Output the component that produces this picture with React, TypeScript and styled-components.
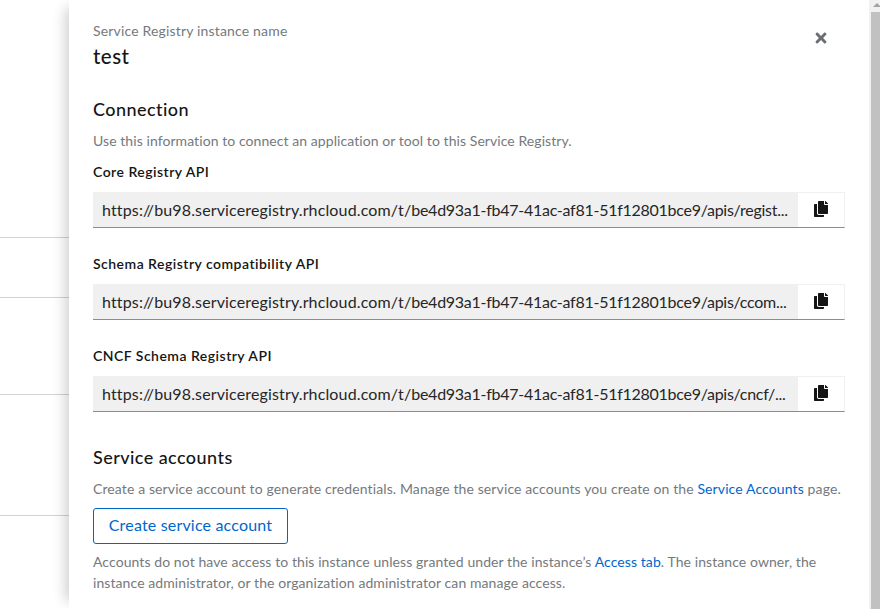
import React from "react";
import styled, { createGlobalStyle } from "styled-components";
import { FaTimes } from "react-icons/fa";

const GlobalStyle = createGlobalStyle`
  * { box-sizing: border-box; }
  html, body { margin: 0; overflow: hidden; background: #fff; }
  body { font-family: Lato, "Open Sans", sans-serif; font-size: 14px; color: #151515; }
  h1, h2, h3, p { margin: 0; }
`;

const Page = styled.div`
  display: flex;
  width: 880px;
  height: 609px;
  overflow: hidden;
`;

const Backdrop = styled.div`
  flex: 0 0 69px;
  display: grid;
  grid-template-rows: 238px 60px 97px 121px 1fr;
`;

const BackdropRow = styled.div`
  border-bottom: 1px solid #d2d2d2;
  &:last-child { border-bottom: 0; }
`;

const Drawer = styled.aside`
  position: relative;
  flex: 0 0 800px;
  padding: 20px 24px 0;
  background: #fff;
  box-shadow: -12px 0 12px -8px rgba(3, 3, 3, 0.18);
`;

const Header = styled.header`
  display: flex;
  justify-content: space-between;
  height: 76px;
`;

const Muted = styled.p<{ $spacing: number }>`
  line-height: 21px;
  color: #75797d;
  letter-spacing: ${(p) => p.$spacing}px;
  white-space: nowrap;
`;

const InstanceName = styled.h1`
  font-size: 20.5px;
  font-weight: 500;
  line-height: 30px;
  letter-spacing: 0.5px;
`;

const CloseButton = styled.button`
  align-self: flex-start;
  display: flex;
  margin: 10px 16px 0 0;
  padding: 0;
  border: 0;
  background: none;
  color: #6a6e73;
`;

const SectionTitle = styled.h2`
  margin-bottom: 7px;
  font-size: 18px;
  font-weight: 500;
  line-height: 27px;
  letter-spacing: 0.44px;
`;

const Fields = styled.div`
  display: flex;
  flex-direction: column;
  gap: 25px;
  padding: 10px 0 32px;
`;

const FieldLabel = styled.h3`
  margin-bottom: 10px;
  font-size: 14px;
  font-weight: 600;
  line-height: 21px;
  letter-spacing: 0.48px;
`;

const CopyField = styled.div`
  display: flex;
  width: 752px;
  height: 36px;
`;

const Url = styled.div`
  flex: 0 0 705px;
  padding-left: 9px;
  border-bottom: 1px solid #8a8d90;
  background: #f0f0f0;
  color: #262626;
  font-size: 16px;
  line-height: 35px;
  letter-spacing: 0.14px;
  white-space: nowrap;
`;

const UrlPath = styled.span`
  letter-spacing: -0.27px;
`;

const CopyButton = styled.button`
  flex: 1;
  display: flex;
  justify-content: center;
  padding: 8px 0 0;
  border: 1px solid #f0f0f0;
  border-left: 0;
  border-bottom-color: #8a8d90;
  background: #fff;
  color: #151515;
`;

const CreateButton = styled.button`
  display: block;
  width: 195px;
  height: 36px;
  margin: 9px 0 7px;
  padding: 0 0 2px;
  border: 1px solid #06c;
  border-radius: 3px;
  background: #fff;
  color: #06c;
  font: 400 16px/32px Lato, sans-serif;
  letter-spacing: 0.18px;
`;

const Link = styled.a`
  color: #06c;
`;

const Scrollbar = styled.div`
  flex: 0 0 11px;
  padding-left: 2px;
  background: #f1f1f1;
  overflow: hidden;
`;

const ScrollArrow = styled.div`
  height: 12px;
  padding: 3px 0 0 2px;
  svg { display: block; }
`;

const Thumb = styled.div`
  height: 597px;
  background: #c1c1c1;
`;

const CopyIcon = () => (
  <svg width="14" height="16" viewBox="0 0 448 512" fill="currentColor">
    <path d="M320 448v40c0 13.255-10.745 24-24 24H24c-13.255 0-24-10.745-24-24V120c0-13.255 10.745-24 24-24h72v296c0 30.879 25.121 56 56 56h168zm0-344V0H152c-13.255 0-24 10.745-24 24v368c0 13.255 10.745 24 24 24h272c13.255 0 24-10.745 24-24V128H344c-13.2 0-24-10.8-24-24zm120.971-31.029L375.029 7.029A24 24 0 0 0 358.059 0H352v96h96v-6.059a24 24 0 0 0-7.029-16.97z" />
  </svg>
);

const host = "https://bu98.serviceregistry.rhcloud.com/t/";
const instancePath = "be4d93a1-fb47-41ac-af81-51f12801bce9/apis/";

const endpoints = [
  { label: "Core Registry API", api: "regist..." },
  { label: "Schema Registry compatibility API", api: "ccom..." },
  { label: "CNCF Schema Registry API", api: "cncf/..." },
];

export default function App() {
  return (
    <Page>
      <GlobalStyle />
      <Backdrop>
        <BackdropRow />
        <BackdropRow />
        <BackdropRow />
        <BackdropRow />
        <BackdropRow />
      </Backdrop>
      <Drawer>
        <Header>
          <div>
            <Muted $spacing={0.17}>Service Registry instance name</Muted>
            <InstanceName>test</InstanceName>
          </div>
          <CloseButton aria-label="Close">
            <FaTimes size={16} />
          </CloseButton>
        </Header>
        <SectionTitle>Connection</SectionTitle>
        <Muted $spacing={0.07}>
          Use this information to connect an application or tool to this Service Registry.
        </Muted>
        <Fields>
          {endpoints.map((e) => (
            <div key={e.label}>
              <FieldLabel>{e.label}</FieldLabel>
              <CopyField>
                <Url>
                  {host}
                  <UrlPath>{instancePath + e.api}</UrlPath>
                </Url>
                <CopyButton aria-label="Copy">
                  <CopyIcon />
                </CopyButton>
              </CopyField>
            </div>
          ))}
        </Fields>
        <SectionTitle>Service accounts</SectionTitle>
        <Muted $spacing={0.115}>
          Create a service account to generate credentials. Manage the service accounts you create on the{" "}
          <Link>Service Accounts</Link> page.
        </Muted>
        <CreateButton>Create service account</CreateButton>
        <Muted $spacing={0.08}>
          Accounts do not have access to this instance unless granted under the instance’s{" "}
          <Link>Access tab</Link>. The instance owner, the
          <br />
          instance administrator, or the organization administrator can manage access.
        </Muted>
      </Drawer>
      <Scrollbar>
        <ScrollArrow>
          <svg width="8" height="4" viewBox="0 0 8 4">
            <path d="M4 0L8 4H0Z" fill="#a3a3a3" />
          </svg>
        </ScrollArrow>
        <Thumb />
      </Scrollbar>
    </Page>
  );
}
